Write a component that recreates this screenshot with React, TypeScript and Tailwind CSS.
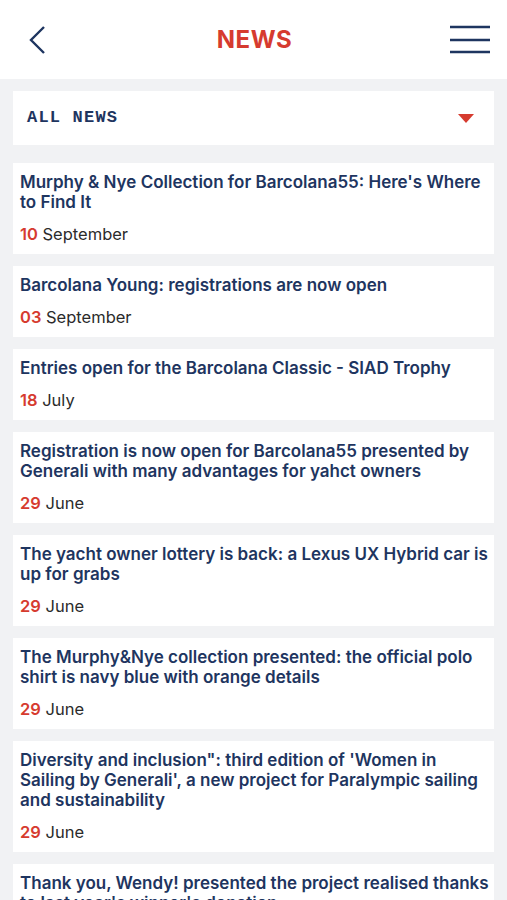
import React from "react";

const items: { title: string; day: string; month: string }[] = [
  { title: "Murphy & Nye Collection for Barcolana55: Here's Where to Find It", day: "10", month: "September" },
  { title: "Barcolana Young: registrations are now open", day: "03", month: "September" },
  { title: "Entries open for the Barcolana Classic - SIAD Trophy", day: "18", month: "July" },
  { title: "Registration is now open for Barcolana55 presented by Generali with many advantages for yahct owners", day: "29", month: "June" },
  { title: "The yacht owner lottery is back: a Lexus UX Hybrid car is up for grabs", day: "29", month: "June" },
  { title: "The Murphy&Nye collection presented: the official polo shirt is navy blue with orange details", day: "29", month: "June" },
  { title: "Diversity and inclusion\": third edition of 'Women in Sailing by Generali', a new project for Paralympic sailing and sustainability", day: "29", month: "June" },
  { title: "Thank you, Wendy! presented the project realised thanks to last year's winner's donation", day: "22", month: "June" },
];

export default function App() {
  return (
    <div className="w-[507px] h-[900px] overflow-hidden bg-[#f1f2f4]" style={{ fontFamily: "Inter, 'Open Sans', sans-serif" }}>
      <header className="h-[79px] bg-white flex items-center justify-between px-[26px]">
        <svg width="22" height="30" viewBox="0 0 22 30" className="ml-[2px]">
          <path d="M16 2 L3 15 L16 28" fill="none" stroke="#1e3560" strokeWidth="2.4" />
        </svg>
        <h1 className="text-[24px] font-bold text-[#d63b2f] tracking-[0.5px] ml-[10px]">NEWS</h1>
        <svg width="42" height="30" viewBox="0 0 42 30" className="-mr-[10px]">
          <path d="M1 2 H41 M1 15 H41 M1 27 H41" stroke="#1e3560" strokeWidth="2.6" />
        </svg>
      </header>
      <div className="px-[13px] pt-[12px] flex flex-col gap-[12px]">
        <div className="h-[54px] bg-white flex items-center justify-between pl-[14px] pr-[20px] mb-[6px]">
          <span className="text-[17px] font-bold tracking-[1.2px] text-[#1e3560]" style={{ fontFamily: "'Liberation Mono', monospace" }}>ALL NEWS</span>
          <svg width="16" height="9" viewBox="0 0 16 9">
            <path d="M0 0 H16 L8 9 Z" fill="#d63b2f" />
          </svg>
        </div>
        {items.map((it, i) => (
          <div key={i} className="bg-white pl-[7px] pr-[5px] pt-[9px] pb-[10px]">
            <p className="text-[17px] leading-[20px] font-semibold text-[#1e3560]">{it.title}</p>
            <p className="mt-[12px] text-[16.5px] leading-[20px] text-[#2b2b2b]">
              <span className="font-semibold text-[#d63b2f]">{it.day}</span> {it.month}
            </p>
          </div>
        ))}
      </div>
    </div>
  );
}
